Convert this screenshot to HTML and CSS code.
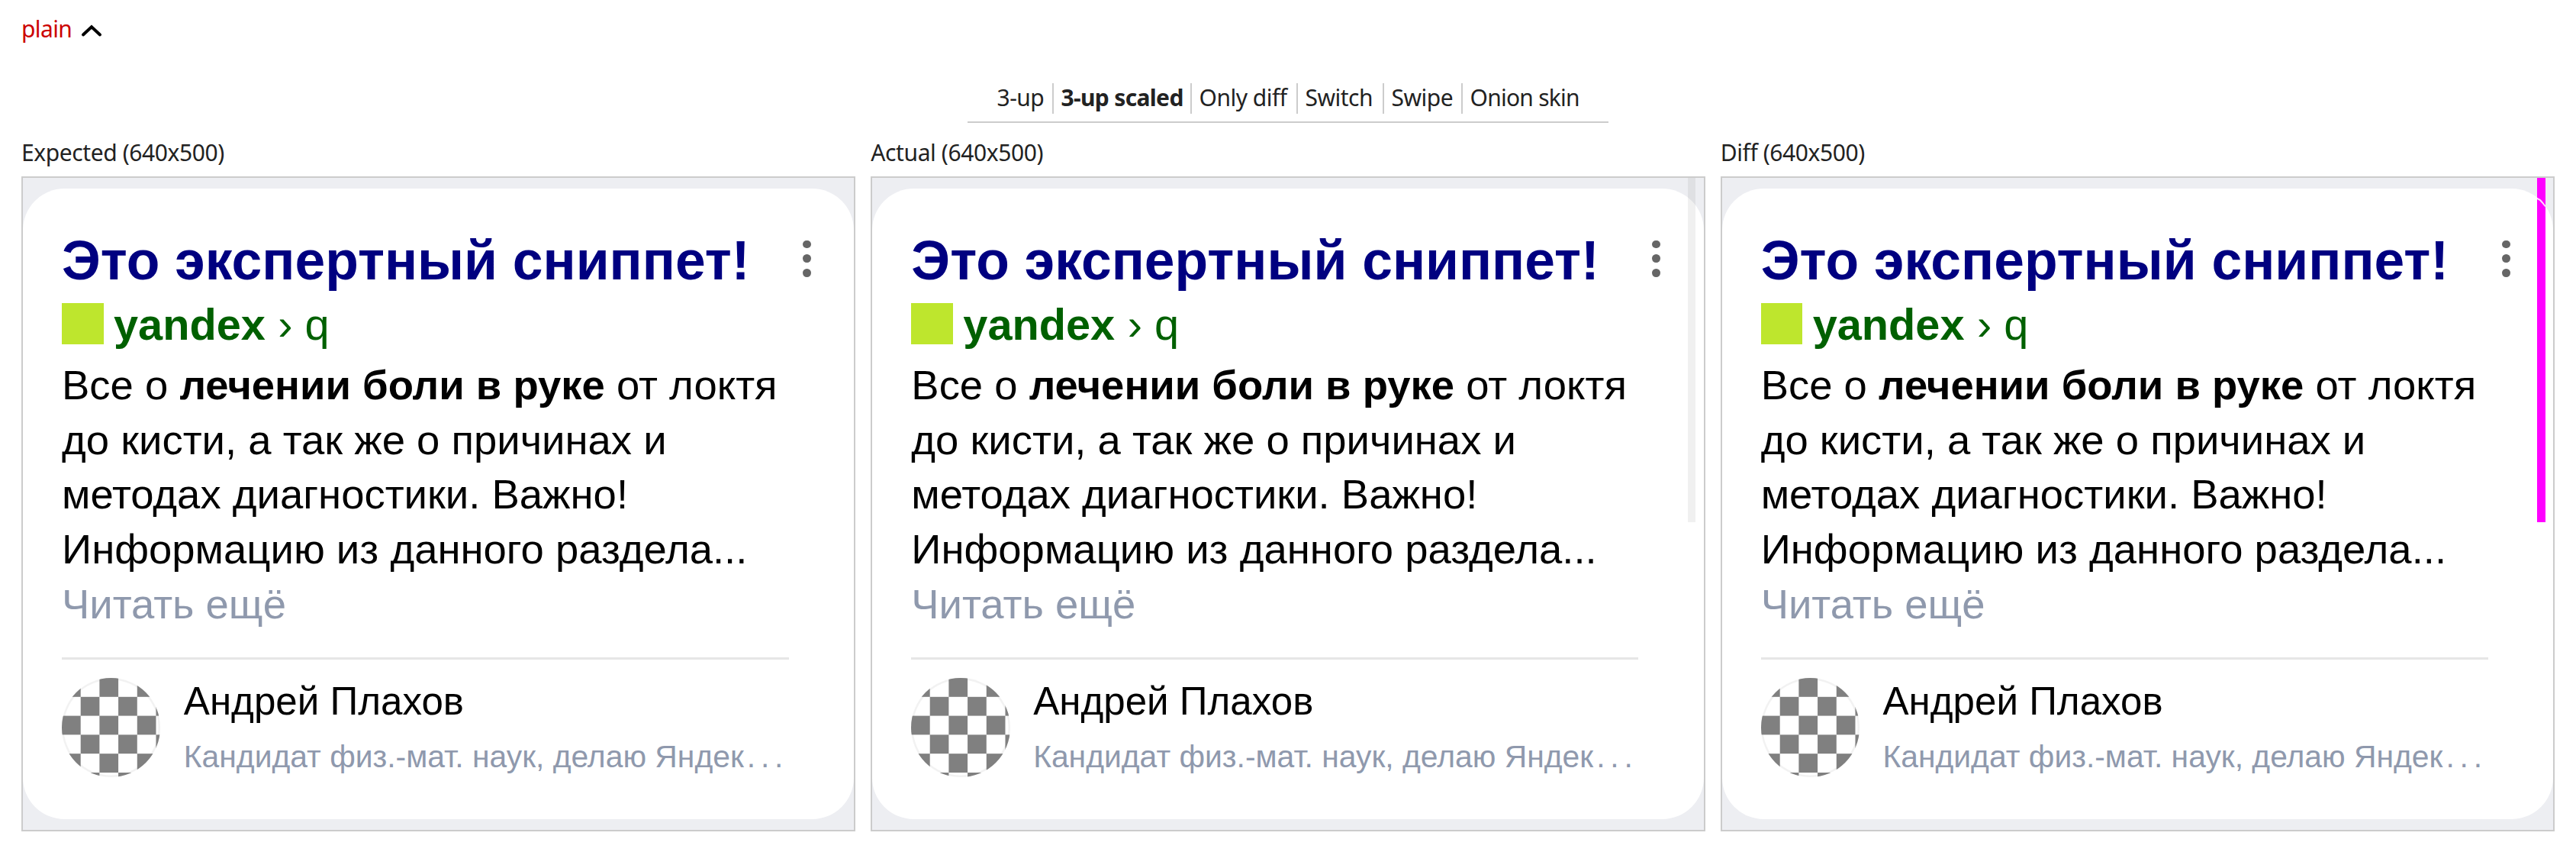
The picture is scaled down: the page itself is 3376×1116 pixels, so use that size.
FILE: index.html
```html
<!DOCTYPE html>
<html lang="ru">
<head>
<meta charset="utf-8">
<title>plain</title>
<link rel="stylesheet" href="styles.css">
</head>
<body>
<header class="state">
  <span class="state-name">plain</span>
  <svg class="chevron" width="28" height="18" viewBox="0 0 28 18"><path d="M3 13.5 14 3.2 25 13.5" fill="none" stroke="#000" stroke-width="4" stroke-linecap="round"/></svg>
</header>
<nav class="modes">
  <span class="mode mode-first">3-up</span>
  <span class="mode mode-active">3-up scaled</span>
  <span class="mode">Only diff</span>
  <span class="mode">Switch</span>
  <span class="mode">Swipe</span>
  <span class="mode mode-last">Onion skin</span>
</nav>
<main class="shots">
  <section class="shot">
    <div class="label">Expected (640x500)</div>
    <div class="frame">
      <article class="card">
        <div class="head"><h2 class="title">Это экспертный сниппет!</h2><div class="menu"><i class="dot"></i><i class="dot"></i><i class="dot"></i></div></div>
        <div class="site"><i class="favicon"></i><b class="host">yandex</b><span class="path">› q</span></div>
        <p class="text">Все о <b>лечении боли в руке</b> от локтя<br>до кисти, а так же о причинах и<br>методах диагностики. Важно!<br>Информацию из данного раздела...<br><span class="more">Читать ещё</span></p>
        <div class="author"><i class="avatar"></i><div class="who"><div class="name">Андрей Плахов</div><div class="about">Кандидат физ.-мат. наук, делаю Яндек<span class="dots">...</span></div></div></div>
      </article>
    </div>
  </section>
  <section class="shot">
    <div class="label">Actual (640x500)</div>
    <div class="frame">
      <article class="card">
        <div class="head"><h2 class="title">Это экспертный сниппет!</h2><div class="menu"><i class="dot"></i><i class="dot"></i><i class="dot"></i></div></div>
        <div class="site"><i class="favicon"></i><b class="host">yandex</b><span class="path">› q</span></div>
        <p class="text">Все о <b>лечении боли в руке</b> от локтя<br>до кисти, а так же о причинах и<br>методах диагностики. Важно!<br>Информацию из данного раздела...<br><span class="more">Читать ещё</span></p>
        <div class="author"><i class="avatar"></i><div class="who"><div class="name">Андрей Плахов</div><div class="about">Кандидат физ.-мат. наук, делаю Яндек<span class="dots">...</span></div></div></div>
      </article>
      <div class="bar bar-scroll"></div>
    </div>
  </section>
  <section class="shot">
    <div class="label">Diff (640x500)</div>
    <div class="frame">
      <article class="card">
        <div class="head"><h2 class="title">Это экспертный сниппет!</h2><div class="menu"><i class="dot"></i><i class="dot"></i><i class="dot"></i></div></div>
        <div class="site"><i class="favicon"></i><b class="host">yandex</b><span class="path">› q</span></div>
        <p class="text">Все о <b>лечении боли в руке</b> от локтя<br>до кисти, а так же о причинах и<br>методах диагностики. Важно!<br>Информацию из данного раздела...<br><span class="more">Читать ещё</span></p>
        <div class="author"><i class="avatar"></i><div class="who"><div class="name">Андрей Плахов</div><div class="about">Кандидат физ.-мат. наук, делаю Яндек<span class="dots">...</span></div></div></div>
      </article>
      <div class="bar bar-diff"><svg class="arc" width="11" height="44" viewBox="0 0 11 44"><path d="M-1 26.3 4 29 7 32.5 11 37.5" fill="none" stroke="#fdf" stroke-width="2"/></svg></div>
    </div>
  </section>
</main>
</body>
</html>
```
FILE: styles.css
```css
* { box-sizing: border-box; }
body {
  margin: 0;
  padding: 20px 28px 0;
  background: #fff;
  color: #222;
  font: 30px/36px "Noto Sans", sans-serif;
  letter-spacing: -0.5px;
}
i { font-style: normal; }
.state { display: flex; height: 36px; }
.state-name { color: #c00; letter-spacing: -0.6px; }
.chevron { margin: 12px 0 0 12px; }

.modes {
  display: grid;
  grid-template-columns: 85px 181px 139px 113px 103px 163px;
  width: 840px;
  height: 52px;
  margin: 53px auto 0;
  padding-left: 28px;
  border-bottom: 2px solid #ccc;
}
.mode {
  height: 40px;
  padding-left: 9.5px;
  border-right: 2px solid #ccc;
  line-height: 38px;
  white-space: nowrap;
}
.mode-first { padding-left: 10.5px; }
.mode-active { font-weight: 700; letter-spacing: -0.65px; }
.mode-last { border-right: 0; letter-spacing: -0.75px; }

.shots {
  display: grid;
  grid-template-columns: repeat(3, 1fr);
  gap: 20px;
  margin-top: 21px;
}
.label { height: 49px; letter-spacing: -0.4px; }
.frame {
  position: relative;
  height: 858px;
  padding: 13.7px 0;
  border: 2px solid #ccc;
  background: #edeef2;
  color: #000;
  font-family: "Liberation Sans", Arial, sans-serif;
  letter-spacing: 0;
}
.card {
  height: 826.8px;
  padding: 54.5px 85.5px 0 51px;
  border-radius: 54.5px;
  background: #fff;
}
.head { display: flex; justify-content: space-between; height: 80px; margin-right: -29px; }
.title { margin: 0; color: navy; font-size: 71.45px; line-height: 80px; white-space: nowrap; }
.menu { display: flex; flex-direction: column; gap: 8px; padding-top: 13.4px; }
.dot { width: 10.8px; height: 10.8px; border-radius: 50%; background: #666; }
.site {
  display: flex;
  align-items: center;
  height: 54.8px;
  margin-top: 15.5px;
  color: #006000;
  font-size: 57.7px;
  line-height: 54px;
}
.favicon { width: 54.5px; height: 54.8px; margin-right: 13.5px; background: #bee62d; }
.host, .path { padding-top: 1.4px; }
.path { margin-left: 16.5px; }
.text { margin: 17.5px 0 0; font-size: 54.46px; line-height: 71.75px; white-space: nowrap; }
.more { color: #8f99ad; }
.author { display: flex; margin-top: 33.7px; padding-top: 23.7px; border-top: 3.4px solid #e6e6e6; }
.avatar {
  width: 129.3px;
  height: 129.8px;
  margin-right: 30.5px;
  border-radius: 50%;
  background: repeating-conic-gradient(#fff 0 25%, #808080 0 50%) 0 0 / 49.4px 49.6px;
  box-shadow: inset 0 0 0 2.5px rgba(128, 128, 128, 0.1);
}
.name { padding-top: 1px; font-size: 51.1px; line-height: 60px; }
.about { margin-top: 16.4px; color: #8f99ad; font-size: 40.85px; line-height: 50px; white-space: nowrap; }
.dots { margin-left: 4px; letter-spacing: 6.8px; }

.bar { position: absolute; top: 0; left: 1068.8px; width: 10.3px; height: 450.5px; }
.bar-scroll { background: rgba(0, 0, 0, 0.06); }
.bar-diff { background: #f0f; }
.arc { display: block; }
```
